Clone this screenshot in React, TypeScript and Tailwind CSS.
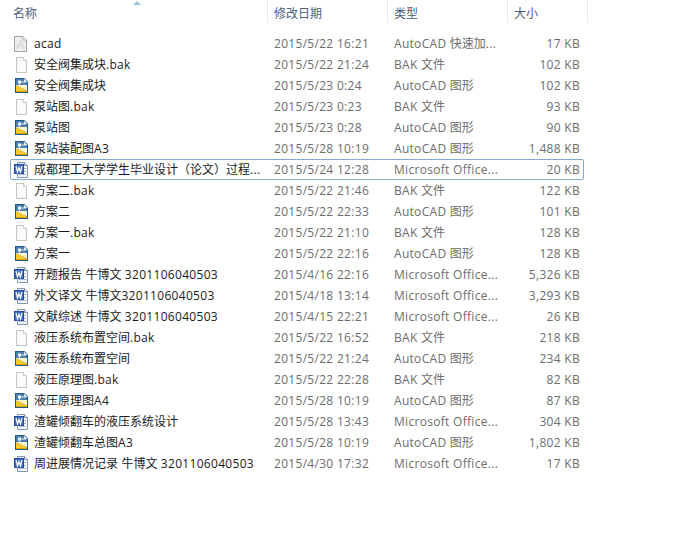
import React from "react";

type Kind = "acad" | "bak" | "dwg" | "doc";
type Row = { n: string; d: string; t: string; s: string; k: Kind; sel?: boolean };

const CAD = "AutoCAD 图形";
const BAK = "BAK 文件";
const DOC = "Microsoft Office...";

const rows: Row[] = [
  { n: "acad", d: "2015/5/22 16:21", t: "AutoCAD 快速加...", s: "17 KB", k: "acad" },
  { n: "安全阀集成块.bak", d: "2015/5/22 21:24", t: BAK, s: "102 KB", k: "bak" },
  { n: "安全阀集成块", d: "2015/5/23 0:24", t: CAD, s: "102 KB", k: "dwg" },
  { n: "泵站图.bak", d: "2015/5/23 0:23", t: BAK, s: "93 KB", k: "bak" },
  { n: "泵站图", d: "2015/5/23 0:28", t: CAD, s: "90 KB", k: "dwg" },
  { n: "泵站装配图A3", d: "2015/5/28 10:19", t: CAD, s: "1,488 KB", k: "dwg" },
  { n: "成都理工大学学生毕业设计（论文）过程...", d: "2015/5/24 12:28", t: DOC, s: "20 KB", k: "doc", sel: true },
  { n: "方案二.bak", d: "2015/5/22 21:46", t: BAK, s: "122 KB", k: "bak" },
  { n: "方案二", d: "2015/5/22 22:33", t: CAD, s: "101 KB", k: "dwg" },
  { n: "方案一.bak", d: "2015/5/22 21:10", t: BAK, s: "128 KB", k: "bak" },
  { n: "方案一", d: "2015/5/22 22:16", t: CAD, s: "128 KB", k: "dwg" },
  { n: "开题报告 牛博文 3201106040503", d: "2015/4/16 22:16", t: DOC, s: "5,326 KB", k: "doc" },
  { n: "外文译文 牛博文3201106040503", d: "2015/4/18 13:14", t: DOC, s: "3,293 KB", k: "doc" },
  { n: "文献综述 牛博文 3201106040503", d: "2015/4/15 22:21", t: DOC, s: "26 KB", k: "doc" },
  { n: "液压系统布置空间.bak", d: "2015/5/22 16:52", t: BAK, s: "218 KB", k: "bak" },
  { n: "液压系统布置空间", d: "2015/5/22 21:24", t: CAD, s: "234 KB", k: "dwg" },
  { n: "液压原理图.bak", d: "2015/5/22 22:28", t: BAK, s: "82 KB", k: "bak" },
  { n: "液压原理图A4", d: "2015/5/28 10:19", t: CAD, s: "87 KB", k: "dwg" },
  { n: "渣罐倾翻车的液压系统设计", d: "2015/5/28 13:43", t: DOC, s: "304 KB", k: "doc" },
  { n: "渣罐倾翻车总图A3", d: "2015/5/28 10:19", t: CAD, s: "1,802 KB", k: "dwg" },
  { n: "周进展情况记录 牛博文 3201106040503", d: "2015/4/30 17:32", t: DOC, s: "17 KB", k: "doc" },
];

// Latin runs are hinted a little wider in the picture; CJK runs keep their natural width.
function Mixed({ text }: { text: string }) {
  const parts = text.split(/([\u0020-\u007e]+)/).filter(Boolean);
  return (
    <>
      {parts.map((p, i) =>
        /^[\u0020-\u007e]+$/.test(p) ? (
          <span key={i} className="tracking-[0.3px]">
            {p}
          </span>
        ) : (
          <span key={i}>{p}</span>
        ),
      )}
    </>
  );
}

function Icon({ k }: { k: Kind }) {
  if (k === "bak")
    return (
      <svg width="16" height="16" viewBox="0 0 16 16" shapeRendering="crispEdges">
        <path d="M2.5 .5H9.5L12.5 3.5V15.5H2.5Z" fill="#fafafa" stroke="#c4c4c4" />
        <path d="M9.5 .5V3.5H12.5" fill="#eeeeee" stroke="#cfcfcf" />
      </svg>
    );
  if (k === "acad")
    return (
      <svg width="16" height="16" viewBox="0 0 16 16">
        <path d="M.5 .5H9L12.5 4V15.5H.5Z" fill="#eeeeee" stroke="#a0a0a0" />
        <path d="M9 .5V4H12.5" fill="#f8f8f8" stroke="#b0b0b0" />
        <path d="M2 13L5.5 4H7.5L11 13H9L8.2 10.5H4.8L4 13ZM5.4 9H7.6L6.5 6Z" fill="#dcdcdc" />
      </svg>
    );
  if (k === "dwg")
    return (
      <svg width="16" height="16" viewBox="0 0 16 16">
        <path d="M1 0H10.5L14 3.5V15H1Z" fill="#235a8c" />
        <path d="M2 1H10L13 4V7H2Z" fill="#4a80b0" />
        <path d="M10 .5V4H13.5" fill="#e8f0f6" />
        <path d="M2 7H13V12.5L2 7.5Z" fill="#fff6d2" />
        <path d="M2 7.5L13 12.5V14H2Z" fill="#f9c928" />
        <rect x="2" y="13" width="11" height="1" fill="#dba314" />
        <rect x="4" y="2.5" width="3" height="3" fill="#f4f8fb" />
        <rect x="7" y="3.5" width="5" height="1" fill="#e2ebf3" />
        <rect x="5" y="5.5" width="1" height="1.5" fill="#e2ebf3" />
      </svg>
    );
  return (
    <svg width="16" height="16" viewBox="0 0 16 16">
      <path d="M3.5 .5H10.5L13.5 3.5V15.5H3.5Z" fill="#f3f6fb" stroke="#8195b6" />
      <path d="M10.5 .5V3.5H13.5" fill="#dfe7f3" stroke="#8195b6" />
      <rect x="10" y="6" width="2" height="1" fill="#a5b6d2" />
      <rect x="10" y="9" width="2" height="1" fill="#a5b6d2" />
      <rect x="5" y="12" width="7" height="1" fill="#a5b6d2" />
      <rect x="0" y="2" width="10" height="10" fill="#24499c" />
      <rect x="1" y="3" width="8" height="8" fill="#3d6bc4" />
      <path d="M2 4L3.5 10L5 5.5L6.5 10L8 4" fill="none" stroke="#ffffff" strokeWidth="1.2" />
    </svg>
  );
}

function HeaderCell({ w, label }: { w: string; label: string }) {
  return (
    <div className={`${w} h-full pl-[6px] pt-[8px] border-r border-[#e3ecf5] text-[#4c607a]`}>
      {label}
    </div>
  );
}

export default function App() {
  return (
    <div
      className="relative w-[674px] h-[547px] bg-white overflow-hidden text-[12px] leading-none"
      style={{ fontFamily: '"Open Sans","Noto Sans CJK SC",sans-serif' }}
    >
      <div className="absolute left-[133px] top-[1px] w-0 h-0 border-l-[4px] border-r-[4px] border-b-[4px] border-l-transparent border-r-transparent border-b-[#9cc3e0]" />
      <div className="flex h-[23px] w-[588px]">
        <div className="w-[268px] h-full pl-[13px] pt-[8px] border-r border-[#e3ecf5] text-[#4c607a]">名称</div>
        <HeaderCell w="w-[120px]" label="修改日期" />
        <HeaderCell w="w-[120px]" label="类型" />
        <HeaderCell w="w-[80px]" label="大小" />
      </div>
      <div className="flex flex-col pt-[10px] pl-[10px]">
        {rows.map((r) => (
          <div
            key={r.n}
            className={`flex items-center h-[21px] w-[574px] border ${
              r.sel ? "border-[#84a9d4] rounded-[2px]" : "border-transparent"
            }`}
          >
            <span className="w-[16px] h-[16px] ml-[3px] mr-[4px] shrink-0 block">
              <Icon k={r.k} />
            </span>
            <span className="w-[240px] shrink-0 whitespace-nowrap text-[#1a1a1a]">
              <Mixed text={r.n} />
            </span>
            <span className="w-[120px] shrink-0 whitespace-nowrap text-[#6d6d6d] tracking-[0.3px]">{r.d}</span>
            <span className="w-[120px] shrink-0 whitespace-nowrap text-[#6d6d6d]">
              <Mixed text={r.t} />
            </span>
            <span className="w-[66px] shrink-0 whitespace-nowrap text-right text-[#6d6d6d] tracking-[0.3px]">{r.s}</span>
          </div>
        ))}
      </div>
    </div>
  );
}
